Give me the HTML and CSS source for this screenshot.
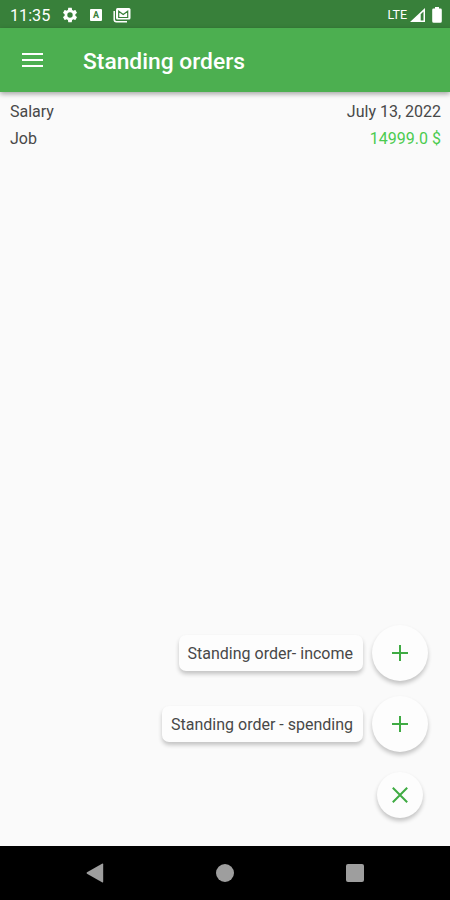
FILE: index.html
```html
<!DOCTYPE html>
<html lang="en">
<head>
  <meta charset="utf-8">
  <title>Standing orders</title>
  <link rel="stylesheet" href="styles.css">
</head>
<body>
  <div class="status-bar">
    <span class="time">11:35</span>
    <svg class="gear" width="18" height="18" viewBox="0 0 24 24"><path fill="#fff" d="M19.14 12.94c.04-.3.06-.61.06-.94s-.02-.64-.07-.94l2.03-1.58c.18-.14.23-.41.12-.61l-1.92-3.32c-.12-.22-.37-.29-.59-.22l-2.39.96c-.5-.38-1.03-.7-1.62-.94l-.36-2.54c-.04-.24-.24-.41-.48-.41h-3.84c-.24 0-.43.17-.47.41l-.36 2.54c-.59.24-1.13.57-1.62.94l-2.39-.96c-.22-.08-.47 0-.59.22L2.74 8.87c-.12.21-.08.47.12.61l2.03 1.58c-.05.3-.09.63-.09.94s.02.64.07.94l-2.03 1.58c-.18.14-.23.41-.12.61l1.92 3.32c.12.22.37.29.59.22l2.39-.96c.5.38 1.03.7 1.62.94l.36 2.54c.05.24.24.41.48.41h3.84c.24 0 .44-.17.47-.41l.36-2.54c.59-.24 1.13-.56 1.62-.94l2.39.96c.22.08.47 0 .59-.22l1.92-3.32c.12-.22.07-.47-.12-.61l-2.01-1.58zM12 15.6A3.6 3.6 0 1 1 12 8.4a3.6 3.6 0 0 1 0 7.2z"/></svg>
    <span class="badge-a">A</span>
    <svg class="mail" width="18" height="16" viewBox="0 0 18 16">
      <path d="M1.2 4v8.500q0 2.200 2.200 2.200H14" fill="none" stroke="#fff" stroke-width="1.500"/>
      <rect x="3" y="1" width="14.500" height="11.600" rx="1.500" fill="#fff"/>
      <path d="M5.700 10.500V4.200L10.200 7.500l4.500-3.300v6.300z" fill="none" stroke="#388038" stroke-width="1.200"/>
    </svg>
    <span class="lte">LTE</span>
    <svg class="signal" width="15" height="14" viewBox="0 0 15 14">
      <path fill="#fff" fill-rule="evenodd" d="M0 14L15 0V14zM10.700 6.200V12.600H13.500V3.600z"/>
    </svg>
    <svg class="battery" width="10" height="16" viewBox="0 0 10 16">
      <path fill="#fff" d="M3 0h4v1.600h1.500q1.300 0 1.300 1.300v11.300q0 1.500-1.500 1.500H1.700Q.2 15.700.2 14.200V2.900q0-1.300 1.300-1.300H3z"/>
    </svg>
  </div>

  <header class="app-bar">
    <div class="menu"><span></span><span></span><span></span></div>
    <h1>Standing orders</h1>
  </header>

  <main class="content">
    <div class="order">
      <div class="row"><span class="name">Salary</span><span class="date">July 13, 2022</span></div>
      <div class="row"><span class="category">Job</span><span class="amount">14999.0 $</span></div>
    </div>

    <div class="speed-dial">
      <div class="action">
        <span class="label">Standing order- income</span>
        <button class="fab"><svg width="18" height="18" viewBox="0 0 18 18"><path d="M9 1v16M1 9h16"/></svg></button>
      </div>
      <div class="action">
        <span class="label">Standing order - spending</span>
        <button class="fab"><svg width="18" height="18" viewBox="0 0 18 18"><path d="M9 1v16M1 9h16"/></svg></button>
      </div>
      <button class="fab close"><svg width="18" height="18" viewBox="0 0 18 18"><path d="M1.800 1.800l14.400 14.400M16.200 1.800L1.800 16.200"/></svg></button>
    </div>
  </main>

  <nav class="nav-bar">
    <svg width="18" height="20" viewBox="0 0 18 20"><path fill="#9e9e9e" d="M16 .8Q17.200.2 17.200 1.500v17q0 1.300-1.200.7L1 10.800q-1-.8 0-1.500z"/></svg>
    <span class="home"></span>
    <span class="recent"></span>
  </nav>
</body>
</html>
```
FILE: styles.css
```css
* {
  box-sizing: border-box;
}
body {
  margin: 0;
  height: 900px;
  display: flex;
  flex-direction: column;
  font-family: Roboto, sans-serif;
  background-color: #fafafa;
  color: #484848;
}
.status-bar {
  height: 28px;
  display: flex;
  align-items: center;
  padding: 1px 8px 0 10px;
  background-color: #38803a;
  color: #fff;
}
.time {
  width: 41px;
  padding-top: 1px;
  font-size: 16.2px;
}
.gear {
  margin-left: 10px;
}
.badge-a {
  width: 12px;
  height: 12px;
  margin-left: 11px;
  border-radius: 1px;
  background-color: #fff;
  color: #38803a;
  font-size: 9px;
  font-weight: bold;
  line-height: 12px;
  text-align: center;
}
.mail {
  margin-left: 11px;
}
.lte {
  margin-left: auto;
  font-size: 12.5px;
}
.signal {
  margin-left: 3px;
}
.battery {
  margin-left: 7px;
}
.app-bar {
  height: 64px;
  display: flex;
  align-items: center;
  padding: 0 22px;
  background-color: #4caf50;
  box-shadow: 0 2px 5px rgba(0, 0, 0, 0.35);
  color: #fff;
}
.menu {
  width: 21px;
  display: flex;
  flex-direction: column;
  gap: 3.5px;
}
.menu span {
  height: 2.5px;
  background-color: #fff;
}
.app-bar h1 {
  margin: 2px 0 0 40px;
  font-size: 22.8px;
  font-weight: 500;
}
.content {
  flex: 1;
  display: flex;
  flex-direction: column;
  justify-content: space-between;
}
.order {
  padding: 5px 9px 5px 10px;
}
.row {
  display: flex;
  justify-content: space-between;
  height: 27px;
  font-size: 16px;
  line-height: 29px;
}
.amount {
  color: #4bcb4f;
}
.speed-dial {
  display: flex;
  flex-direction: column;
  align-items: flex-end;
  gap: 15px;
  padding: 0 22px 28px 0;
}
.action {
  display: flex;
  align-items: center;
  gap: 9px;
}
.label {
  height: 36px;
  padding: 0 10px 0 9px;
  border-radius: 7px;
  background-color: #fdfdfd;
  box-shadow: 0 3px 4px rgba(0, 0, 0, 0.22);
  font-size: 16px;
  line-height: 37px;
  white-space: nowrap;
}
.fab {
  width: 56px;
  height: 56px;
  display: flex;
  align-items: center;
  justify-content: center;
  padding: 0;
  border: none;
  border-radius: 50%;
  background-color: #fdfdfd;
  box-shadow: 0 3px 4px rgba(0, 0, 0, 0.22);
}
.fab svg {
  fill: none;
  stroke: #3fab43;
  stroke-width: 2;
}
.fab.close {
  width: 46px;
  height: 46px;
  margin: 5px 5px 0 0;
}
.nav-bar {
  height: 54px;
  display: flex;
  align-items: center;
  justify-content: space-between;
  padding: 0 86px;
  background-color: #000;
}
.home {
  width: 18px;
  height: 18px;
  border-radius: 50%;
  background-color: #9e9e9e;
}
.recent {
  width: 18px;
  height: 18px;
  border-radius: 2px;
  background-color: #9e9e9e;
}
```
